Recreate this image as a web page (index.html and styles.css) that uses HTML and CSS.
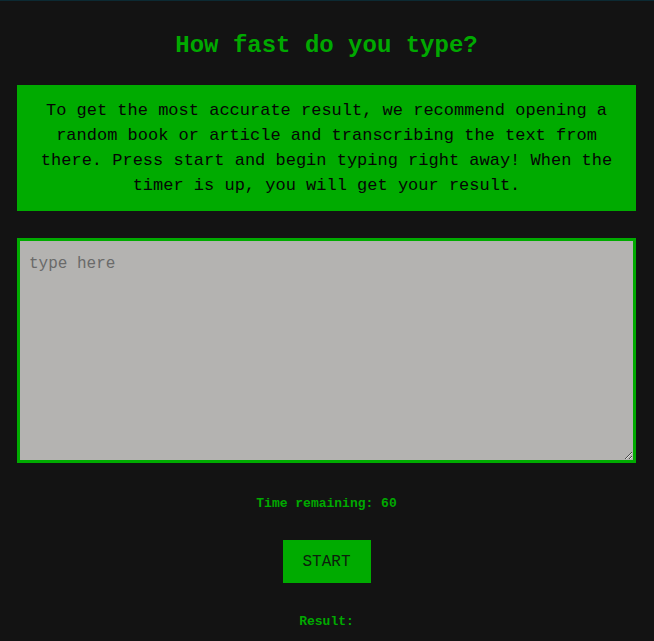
FILE: index.html
```html
<!DOCTYPE html>
<html>
<head>
<meta charset="utf-8">
<title>Typing speed</title>
<link rel="stylesheet" href="styles.css">
</head>
<body>
<main class="app">
  <h1 class="title">How fast do you type?</h1>
  <p class="intro">To get the most accurate result, we recommend opening a random book or article and transcribing the text from there. Press start and begin typing right away! When the timer is up, you will get your result.</p>
  <textarea class="input" placeholder="type here"></textarea>
  <div class="timer">Time remaining: 60</div>
  <button class="start">START</button>
  <div class="result">Result:</div>
</main>
</body>
</html>
```

FILE: styles.css
```css
html, body {
  margin: 0;
  padding: 0;
  background: #131313;
  height: 100%;
}
body {
  border-top: 1px solid #0c2a33;
  box-sizing: border-box;
  font-family: "Liberation Mono", "DejaVu Sans Mono", monospace;
}
.app {
  width: 619px;
  margin: 0 0 0 17px;
  display: flex;
  flex-direction: column;
  align-items: center;
}
.title {
  margin: 30px 0 0;
  font-size: 24px;
  line-height: 30px;
  font-weight: bold;
  color: #00a900;
}
.intro {
  margin: 24px 0 0;
  width: 100%;
  box-sizing: border-box;
  background: #00ab00;
  color: #050505;
  font-size: 17px;
  line-height: 25px;
  text-align: center;
  padding: 13px 20px 13px;
}
.input {
  margin-top: 27px;
  width: 100%;
  height: 225px;
  box-sizing: border-box;
  border: 3px solid #00ab00;
  background: #b4b3b1;
  padding: 13px 10px 10px 9px;
  font-family: "Liberation Mono", "DejaVu Sans Mono", monospace;
  font-size: 16px;
  line-height: 20px;
  color: #222;
  outline: none;
}
.input::placeholder {
  color: #6a6a6a;
}
.timer {
  margin-top: 33px;
  font-size: 13px;
  line-height: 16px;
  font-weight: bold;
  color: #00a900;
}
.start {
  margin-top: 28px;
  width: 88px;
  height: 43px;
  border: none;
  background: #00ab00;
  color: #0c1f0c;
  font-family: "Liberation Mono", "DejaVu Sans Mono", monospace;
  font-size: 16px;
  padding: 0;
}
.result {
  margin-top: 31px;
  font-size: 13px;
  line-height: 16px;
  font-weight: bold;
  color: #00a900;
}
```
